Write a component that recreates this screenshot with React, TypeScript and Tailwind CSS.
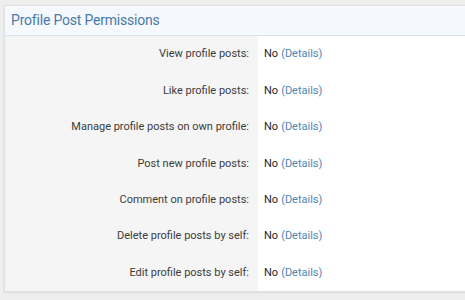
const rows = [
  'View profile posts:',
  'Like profile posts:',
  'Manage profile posts on own profile:',
  'Post new profile posts:',
  'Comment on profile posts:',
  'Delete profile posts by self:',
  'Edit profile posts by self:',
];

export default function App() {
  return (
    <div className="w-[465px] h-[300px] bg-[#eeeeee] pt-[5px] pl-[4px] overflow-hidden font-['Roboto',sans-serif]">
      <div className="w-[470px] bg-white border border-[#dfdfdf] shadow-[0_1px_2px_rgba(0,0,0,0.08)]">
        <div className="h-[30px] bg-[#f5f9fd] border-b border-[#dbe4ed] pl-[6px] flex items-center text-[14px] tracking-[-0.2px] text-[#4a7aa6]">
          Profile Post Permissions
        </div>
        <div className="flex flex-col">
          {rows.map((label) => (
            <div key={label} className="flex h-[36.4px] text-[11px]">
              <div className="w-[253px] bg-[#f5f5f5] flex items-center justify-end pr-[9px] pt-[1px] text-[#3c3c3c]">
                {label}
              </div>
              <div className="flex-1 flex items-center pl-[6px] pt-[1px] text-[#1f1f1f]">
                No <span className="ml-[3px] text-[#4b86b5]">(Details)</span>
              </div>
            </div>
          ))}
        </div>
      </div>
    </div>
  );
}
